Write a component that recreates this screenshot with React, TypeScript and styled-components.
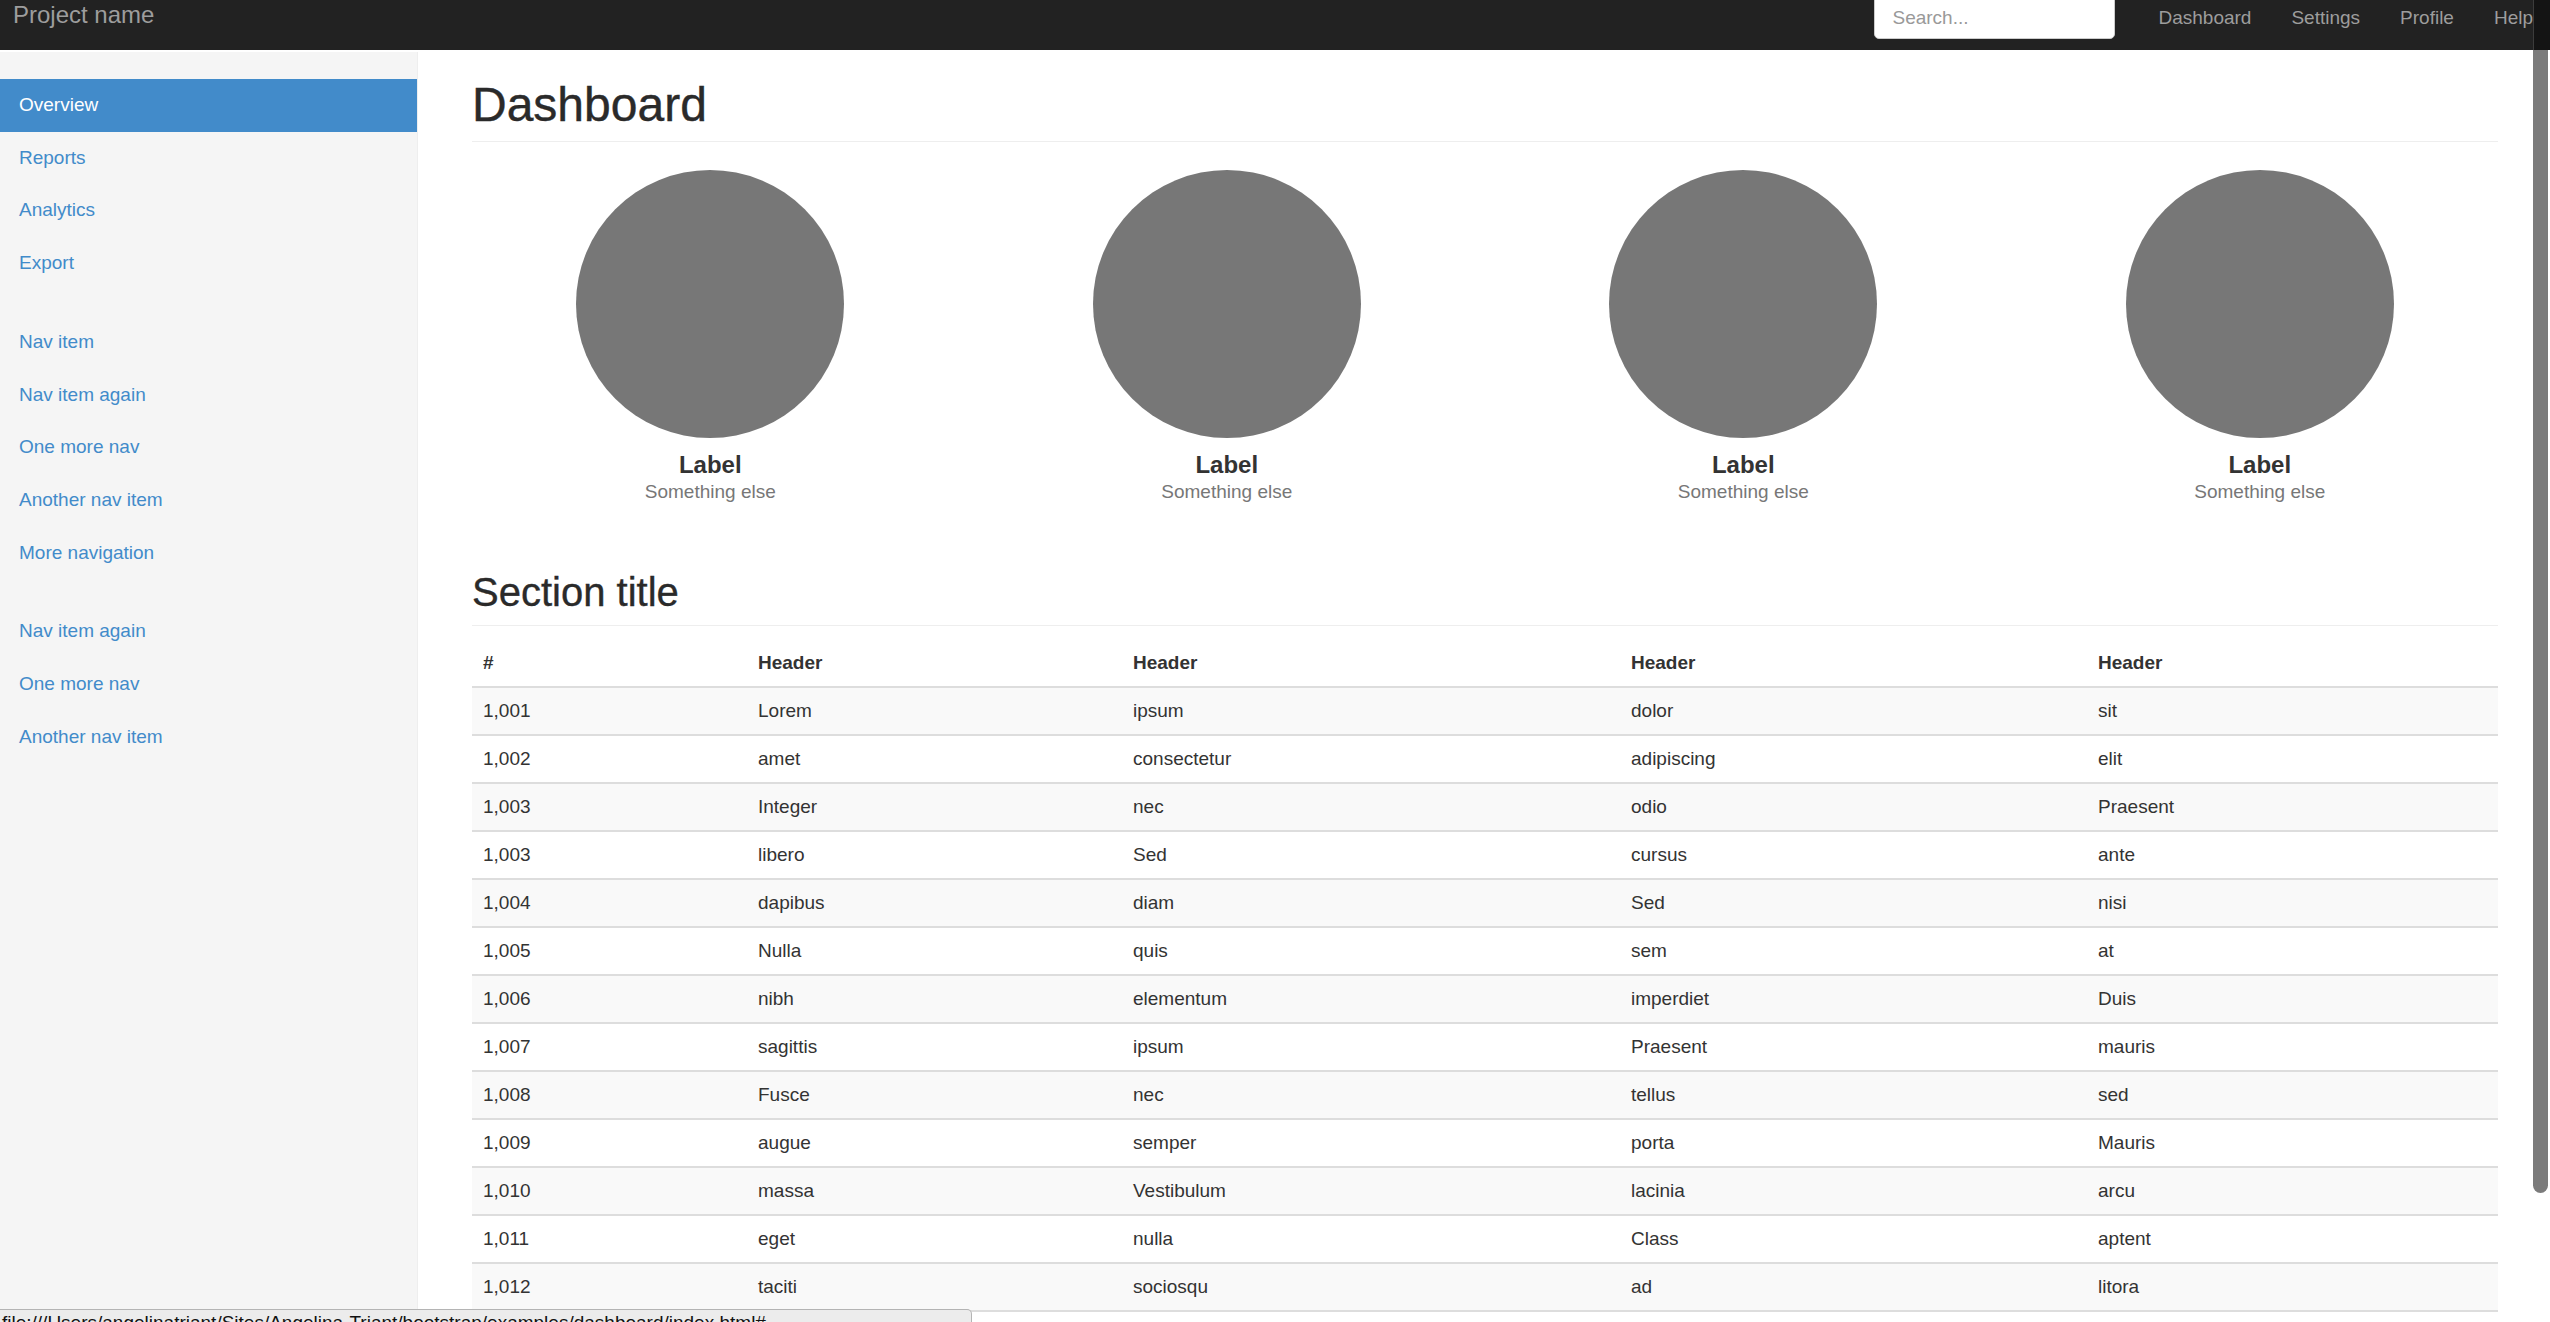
import React from "react";
import styled, { createGlobalStyle } from "styled-components";

const GlobalStyle = createGlobalStyle`
  html, body {
    margin: 0;
    padding: 0;
    height: 100%;
    overflow: hidden;
    background: #fff;
  }
  body {
    font-family: "Liberation Sans", Arial, Helvetica, sans-serif;
    color: #333;
  }
  * { box-sizing: border-box; }
`;

const AppShell = styled.div`
  height: 100vh;
  display: flex;
  flex-direction: column;
`;

const Navbar = styled.header`
  flex: 0 0 50px;
  height: 50px;
  display: flex;
  align-items: flex-start;
  background: #222;
  padding-left: 13px;
  overflow: hidden;
`;

const Brand = styled.a`
  font-size: 24px;
  line-height: 30px;
  color: #9d9d9d;
  text-decoration: none;
  white-space: nowrap;
`;

const NavRight = styled.div`
  margin-left: auto;
  display: flex;
  align-items: flex-start;
`;

const Search = styled.input`
  width: 241px;
  height: 46px;
  margin-top: -7px;
  border: 1px solid #ccc;
  border-radius: 5px;
  padding: 4px 17px 0;
  font-family: "Liberation Sans", Arial, sans-serif;
  font-size: 19px;
  color: #555;
  background: #fff;
  outline: none;
  &::placeholder {
    color: #999;
  }
`;

const NavLinks = styled.nav`
  margin-left: 43px;
  display: flex;
  gap: 40px;
`;

const NavLink = styled.a`
  font-size: 19px;
  line-height: 35px;
  color: #9d9d9d;
  text-decoration: none;
  white-space: nowrap;
`;

const Gutter = styled.div`
  flex: 0 0 17px;
  align-self: stretch;
  background: #141414;
  border-left: 1px solid #3c3c3c;
`;

const BodyRow = styled.div`
  flex: 1;
  min-height: 0;
  display: flex;
`;

const Viewport = styled.div`
  flex: 1;
  min-width: 0;
  display: flex;
  overflow: hidden;
`;

const ScrollTrack = styled.div`
  flex: 0 0 17px;
  background: #fff;
  padding-right: 2px;
`;

const ScrollThumb = styled.div`
  width: 15px;
  height: 1143px;
  border-radius: 0 0 8px 8px;
  background: #7b7b7b;
`;

const Sidebar = styled.aside`
  flex: 0 0 418px;
  width: 418px;
  margin-top: 2px;
  padding-top: 27px;
  background: #f5f5f5;
  border-right: 1px solid #eee;
`;

const NavGroup = styled.ul`
  list-style: none;
  margin: 0 0 26px;
  padding: 0;
`;

const SideLink = styled.a<{ $active?: boolean }>`
  display: block;
  padding: 13px 19px;
  font-size: 19px;
  line-height: 26.7px;
  text-decoration: none;
  color: ${(p) => (p.$active ? "#fff" : "#428bca")};
  background: ${(p) => (p.$active ? "#428bca" : "transparent")};
`;

const Main = styled.main`
  flex: 1;
  min-width: 0;
  padding: 29px 35px 33px 54px;
`;

const PageHeader = styled.h1`
  margin: 0;
  font-size: 48px;
  font-weight: 400;
  line-height: 52.8px;
  color: #2a2a2a;
  padding-bottom: 9px;
  border-bottom: 1px solid #eee;
  -webkit-text-stroke: 0.4px #2a2a2a;
`;

const Placeholders = styled.div`
  display: grid;
  grid-template-columns: repeat(4, 1fr);
  margin: 28px -20px 0;
`;

const Placeholder = styled.div`
  display: flex;
  flex-direction: column;
  align-items: center;
  text-align: center;
`;

const Circle = styled.div`
  width: 268px;
  height: 268px;
  border-radius: 50%;
  background: #777;
`;

const PlaceLabel = styled.h4`
  margin: 14px 0 0;
  font-size: 24px;
  line-height: 26.4px;
  font-weight: 700;
  color: #333;
`;

const PlaceSub = styled.span`
  font-size: 19px;
  line-height: 27px;
  color: #777;
`;

const SubHeader = styled.h2`
  margin: 65px 0 0;
  font-size: 40px;
  font-weight: 400;
  line-height: 44px;
  color: #2a2a2a;
  padding-bottom: 11px;
  border-bottom: 1px solid #eee;
  -webkit-text-stroke: 0.35px #2a2a2a;
`;

const Table = styled.table`
  margin: 14px 0 27px;
  width: 100%;
  border-collapse: collapse;
  table-layout: fixed;
  font-size: 19px;
  color: #333;
`;

const Col = styled.col<{ $w: number }>`
  width: ${(p) => p.$w}px;
`;

const Th = styled.th`
  text-align: left;
  padding: 11px;
  line-height: 24px;
  font-weight: 700;
  border-bottom: 2px solid #ddd;
`;

const Tr = styled.tr`
  &:nth-child(odd) {
    background: #f9f9f9;
  }
`;

const Td = styled.td`
  padding: 11px;
  line-height: 24px;
  border-top: 2px solid #ddd;
  white-space: nowrap;
  overflow: hidden;
`;

const StatusBubble = styled.div`
  position: fixed;
  left: 0;
  bottom: -13px;
  z-index: 10;
  width: 972px;
  height: 26px;
  padding: 2px 4px 0 2px;
  background: #ececec;
  border: 1px solid #b4b4b4;
  border-left: none;
  border-top-right-radius: 5px;
  font-family: "Liberation Sans", Arial, sans-serif;
  font-size: 19px;
  line-height: 22px;
  color: #111;
  white-space: nowrap;
  overflow: hidden;
`;

const topLinks = ["Dashboard", "Settings", "Profile", "Help"];

const groups: { label: string; active?: boolean }[][] = [
  [{ label: "Overview", active: true }, { label: "Reports" }, { label: "Analytics" }, { label: "Export" }],
  [
    { label: "Nav item" },
    { label: "Nav item again" },
    { label: "One more nav" },
    { label: "Another nav item" },
    { label: "More navigation" },
  ],
  [{ label: "Nav item again" }, { label: "One more nav" }, { label: "Another nav item" }],
];

const rows: string[][] = [
  ["1,001", "Lorem", "ipsum", "dolor", "sit"],
  ["1,002", "amet", "consectetur", "adipiscing", "elit"],
  ["1,003", "Integer", "nec", "odio", "Praesent"],
  ["1,003", "libero", "Sed", "cursus", "ante"],
  ["1,004", "dapibus", "diam", "Sed", "nisi"],
  ["1,005", "Nulla", "quis", "sem", "at"],
  ["1,006", "nibh", "elementum", "imperdiet", "Duis"],
  ["1,007", "sagittis", "ipsum", "Praesent", "mauris"],
  ["1,008", "Fusce", "nec", "tellus", "sed"],
  ["1,009", "augue", "semper", "porta", "Mauris"],
  ["1,010", "massa", "Vestibulum", "lacinia", "arcu"],
  ["1,011", "eget", "nulla", "Class", "aptent"],
  ["1,012", "taciti", "sociosqu", "ad", "litora"],
  ["1,013", "torquent", "per", "conubia", "nostra"],
  ["1,014", "per", "inceptos", "himenaeos", "Curabitur"],
  ["1,015", "sodales", "ligula", "in", "libero"],
];

const colWidths = [275, 375, 498, 467, 411];

export default function App() {
  return (
    <>
      <GlobalStyle />
      <AppShell>
        <Navbar>
          <Brand href="#">Project name</Brand>
          <NavRight>
            <Search placeholder="Search..." />
            <NavLinks>
              {topLinks.map((l) => (
                <NavLink key={l} href="#">
                  {l}
                </NavLink>
              ))}
            </NavLinks>
          </NavRight>
          <Gutter />
        </Navbar>
        <BodyRow>
          <Viewport>
            <Sidebar>
              {groups.map((g, gi) => (
                <NavGroup key={gi}>
                  {g.map((item, i) => (
                    <li key={i}>
                      <SideLink href="#" $active={item.active}>
                        {item.label}
                      </SideLink>
                    </li>
                  ))}
                </NavGroup>
              ))}
            </Sidebar>
            <Main>
              <PageHeader>Dashboard</PageHeader>
              <Placeholders>
                {[0, 1, 2, 3].map((i) => (
                  <Placeholder key={i}>
                    <Circle />
                    <PlaceLabel>Label</PlaceLabel>
                    <PlaceSub>Something else</PlaceSub>
                  </Placeholder>
                ))}
              </Placeholders>
              <SubHeader>Section title</SubHeader>
              <Table>
                <colgroup>
                  {colWidths.map((w, i) => (
                    <Col key={i} $w={w} />
                  ))}
                </colgroup>
                <thead>
                  <tr>
                    <Th>#</Th>
                    <Th>Header</Th>
                    <Th>Header</Th>
                    <Th>Header</Th>
                    <Th>Header</Th>
                  </tr>
                </thead>
                <tbody>
                  {rows.map((r, ri) => (
                    <Tr key={ri}>
                      {r.map((c, ci) => (
                        <Td key={ci}>{c}</Td>
                      ))}
                    </Tr>
                  ))}
                </tbody>
              </Table>
            </Main>
          </Viewport>
          <ScrollTrack>
            <ScrollThumb />
          </ScrollTrack>
        </BodyRow>
        <StatusBubble>file:///Users/angelinatriant/Sites/Angelina-Triant/bootstrap/examples/dashboard/index.html#</StatusBubble>
      </AppShell>
    </>
  );
}
